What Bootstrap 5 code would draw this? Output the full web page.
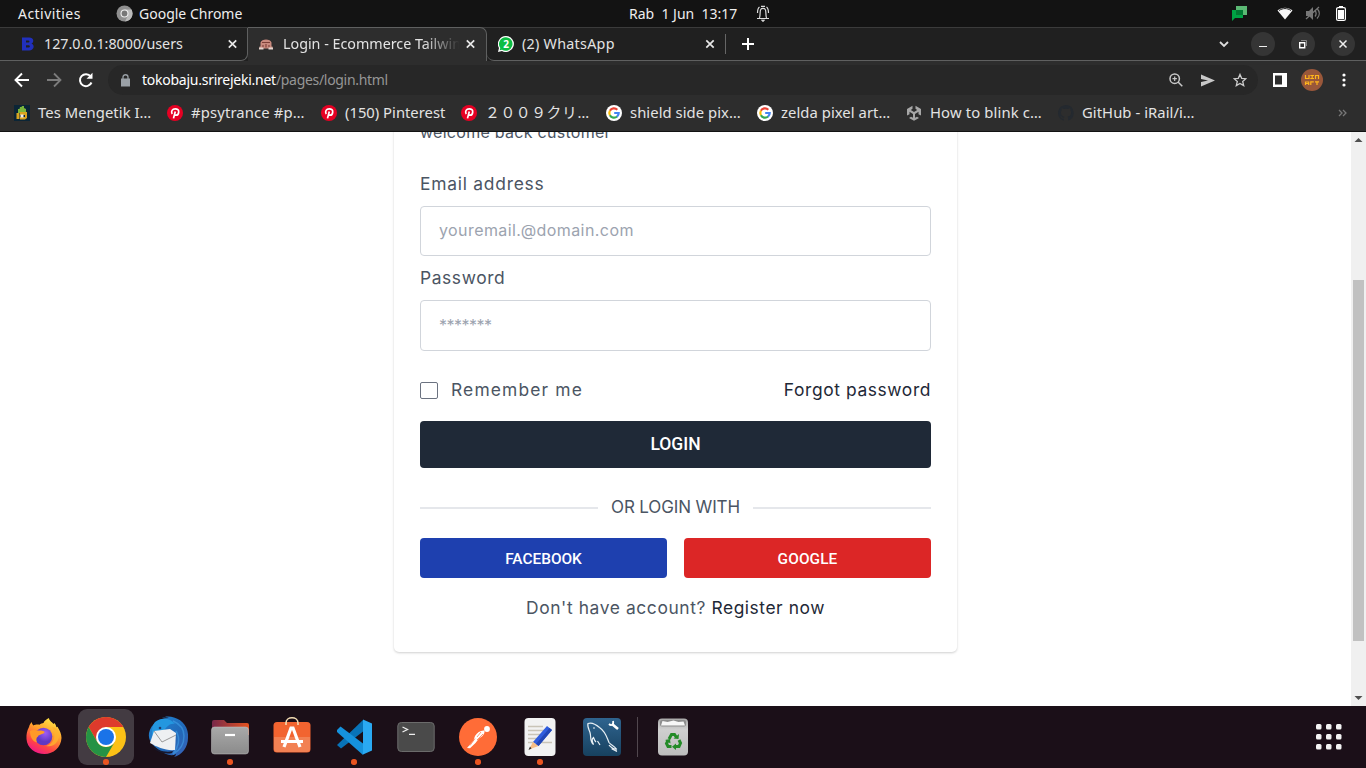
<!DOCTYPE html>
<html lang="id">
<head>
<meta charset="utf-8">
<meta name="viewport" content="width=device-width, initial-scale=1">
<title>Login - Ecommerce Tailwind</title>
<link rel="stylesheet" href="https://cdn.jsdelivr.net/npm/bootstrap@5.3.0/dist/css/bootstrap.min.css">
<style>
body{font-family:"Noto Sans","Noto Sans CJK JP",sans-serif;font-size:14px;line-height:20px;background:#fff}
svg{display:block;flex:none}
.desktop{width:1366px;height:768px}
.sysbar{height:27px;background:#131313;color:#eee;display:grid;grid-template-columns:18px 98px 510px 134px 1fr;line-height:27px}
.tabstrip{height:34px;background:#202020;border-top:1px solid #3b3b3b;color:#e3e3e3;font-size:14.3px}
.tab-side{border-bottom:1px solid #5f6060;height:33px}
.tab-one{width:248px;border-right:1px solid #5f6060;border-bottom-right-radius:7px;padding-left:20px;padding-right:9px}
.tab-live{width:239px;height:34px;margin-top:-1px;background:#2d2d2d;border-top:1px solid #5f6060;border-right:1px solid #5f6060;border-top-right-radius:7px;padding:0 10px 1px 11px}
.tab-rest{border-bottom-left-radius:7px;padding-left:11px}
.fadeout{width:176px;-webkit-mask-image:linear-gradient(90deg,#000 140px,transparent 177px);overflow:hidden}
.winbtn{width:24px;height:24px;border-radius:50%;background:#353535}
.toolbar{height:38px;background:#2d2d2d;padding-left:14px}
.omnibox{width:1150px;height:30px;border-radius:15px;background:#272727;padding:0 10px 0 13px;font-size:14px}
.host{letter-spacing:-.25px}
.path{letter-spacing:-.31px;color:#969696}
.bookmarks{height:33px;background:#2d2d2d;border-bottom:1px solid #121212;color:#e3e3e3;padding:0 0 5px 14px;font-size:14.8px;display:grid;grid-template-columns:153px 154px 140px 145px 151px 149px 152px 280px 20px}
.bookmarks>div{gap:8px;letter-spacing:.06px}
.bookmarks span{margin-top:-2px}
.bookmarks .wide{letter-spacing:.6px}
.viewport{height:574px}
.scrollrail{width:15px;background:#f0f0f0}
.thumb{width:11px;height:361px;background:#c1c1c1;margin-top:135px}
.page{color:#4b5563;font-family:Inter,sans-serif;font-size:17.4px;line-height:26px;letter-spacing:.6px}
.login-card{width:563px;height:540px;margin-top:-20px;padding:7px 26px 0;border-radius:5px;box-shadow:0 1px 3px rgba(0,0,0,.13),0 1px 2px rgba(0,0,0,.07)}
.welcome{font-size:16px;letter-spacing:.28px;margin-bottom:26px}
.email-label{letter-spacing:.76px}
.field{height:50px;border:1px solid #d1d5db;border-radius:4px;padding:0 18px 2px;margin-top:9px;margin-bottom:9px;font-size:16px;color:#4b5563;letter-spacing:.42px}
.field::placeholder{color:#9ca3af;opacity:1}
.field.pw{height:51px;margin-bottom:26px}
.field.pw::placeholder{letter-spacing:-.5px}
.box{width:18px;height:17px;border:1px solid #6b7280;border-radius:2px;margin-right:13px;margin-top:1px}
.remember{letter-spacing:1.15px}
.divider-text{font-size:17px;letter-spacing:-.13px}
.ink{color:#1f2937}
.btn-x{font-family:Roboto,sans-serif;font-weight:500;color:#fff;border-radius:4px;letter-spacing:0}
.btn-x:hover{color:#fff}
.btn-login{height:47px;font-size:17.5px;background:#1f2937;margin:18px 0 26px}
.btn-alt{height:40px;font-size:15.4px;line-height:42px}
.btn-fb{background:#1e40af}
.btn-gg{background:#dc2626;letter-spacing:.1px}
.rule{height:2px;background:#e5e7eb;margin-top:2px}
.dock{height:62px;background:#1b0f18;padding-left:16px}
.app{width:56px;height:56px;border-radius:9px;margin-right:6px}
.app.on{background:#433b42}
.app.run::after{content:"";position:absolute;left:25.3px;bottom:.3px;width:5.400px;height:5.400px;border-radius:50%;background:#e95420}
.t{white-space:nowrap}
</style>
</head>
<body>
<svg width="0" height="0" class="position-absolute"><defs>
<symbol id="pin" viewBox="0 0 16 16"><circle cx="8" cy="8" r="8" fill="#e60023"/><path d="M5.200 9C3.600 6.200 5.500 3.800 8.200 3.800c2.300 0 3.700 1.400 3.500 3.300-.2 2-1.400 3.200-2.800 3.100-.8-.1-1.300-.5-1.400-1M8.300 6.500 6.500 13.400" fill="none" stroke="#fff" stroke-width="1.700"/></symbol>
<symbol id="goog" viewBox="0 0 16 16"><circle cx="8" cy="8" r="8" fill="#fff"/><g fill="none" stroke-width="2.200"><path d="M11.300 4.700A4.700 4.700 0 0 0 3.900 5.800" stroke="#ea4335"/><path d="M3.900 5.700a4.700 4.700 0 0 0 0 4.600" stroke="#fbbc05"/><path d="M3.900 10.200a4.700 4.700 0 0 0 7.200 1.300" stroke="#34a853"/><path d="M8.200 8h4.500a4.700 4.700 0 0 1-1.700 3.600" stroke="#4285f4"/></g></symbol>
<symbol id="cross" viewBox="0 0 10 10"><path d="m1.300 1.300 7.400 7.400m0-7.400-7.400 7.400" stroke="#e8e8e8" stroke-width="1.700"/></symbol>
<linearGradient id="ffBody" x1=".8" y1="0" x2=".3" y2="1"><stop offset="0" stop-color="#fff04a"/><stop offset=".4" stop-color="#ffa02b"/><stop offset=".75" stop-color="#ff4545"/><stop offset="1" stop-color="#f0158a"/></linearGradient>
<radialGradient id="ffGlobe" cx=".6" cy=".3"><stop offset="0" stop-color="#a05cf5"/><stop offset="1" stop-color="#6038c4"/></radialGradient>
<linearGradient id="tb" x1="0" y1="0" x2="1" y2="1"><stop offset="0" stop-color="#1f8ad8"/><stop offset=".6" stop-color="#2268b8"/><stop offset="1" stop-color="#3b62b8"/></linearGradient>
<linearGradient id="grey" x2="0" y2="1"><stop offset="0" stop-color="#a9a9a9"/><stop offset="1" stop-color="#8b8b8b"/></linearGradient>
<linearGradient id="fold"><stop offset="0" stop-color="#78284a"/><stop offset="1" stop-color="#e5531f"/></linearGradient>
<linearGradient id="sql" x2="0" y2="1"><stop offset="0" stop-color="#2f648f"/><stop offset="1" stop-color="#17415f"/></linearGradient>
<linearGradient id="bin" x2="0" y2="1"><stop offset="0" stop-color="#a8a8a8"/><stop offset=".3" stop-color="#cfcfcf"/><stop offset="1" stop-color="#bdbdbd"/></linearGradient>
</defs></svg>
<div class="desktop d-flex flex-column overflow-hidden">
  <header class="sysbar">
    <span></span><span class="t" style="letter-spacing:.45px">Activities</span>
    <div class="d-flex align-items-center t"><svg width="17" height="17" viewBox="0 0 17 17" style="margin-right:6px"><circle cx="8.500" cy="8.500" r="8" fill="#8f8f8f"/><path d="M8.500 4.500h7A8 8 0 0 1 9 16.500l3-6z" fill="#bbb"/><circle cx="8.500" cy="8.500" r="4" fill="#eee"/><circle cx="8.500" cy="8.500" r="2.900" fill="#777"/></svg><span>Google Chrome</span></div>
    <div class="d-flex align-items-center t"><span style="margin-left:3px;white-space:pre">Rab  1 Jun  13:17</span></div>
    <div class="d-flex align-items-center">
      <svg style="margin-left:-4px" width="14" height="17" viewBox="0 0 14 17" fill="none" stroke="#ddd"><path d="M1 13.500h12M3.500 13c1-2 .2-7 1.200-8.500C5.500 3 8.500 3 9.300 4.500c1 1.500.2 6.500 1.200 8.500M1.500 8c0-3 .5-5 2-6M12.500 8c0-3-.5-5-2-6M5 1.300h4" stroke-width="1.200"/><path d="M5.500 15.200h3L7 16.500z" fill="#ddd"/></svg>
      <svg class="ms-auto" width="15" height="15" viewBox="0 0 15 15"><path d="M4 0h11v9H4z" fill="#5bb974"/><path d="M0 4h11v8H3l-3 3z" fill="#00a344"/><path d="M4 4h7v5H4z" fill="#007a33"/></svg>
      <svg style="margin-left:30px" width="16" height="13" viewBox="0 0 16 13"><path d="M.5 3.500C5-.2 11-.2 15.500 3.500L8 12.500z" fill="#f5f5f5"/><path d="M2 3.500c4-2.600 8-2.600 12 0" stroke="#222" fill="none"/></svg>
      <svg style="margin-left:12px" width="16" height="15" viewBox="0 0 16 15"><path d="M1 5h3l4-4v13l-4-4H1z" fill="#777"/><path d="M10 4.500c1.500 2 1.500 4 0 6M12 2.500c3 3 3 7 0 10M1 13 14 1" fill="none" stroke="#777" stroke-width="1.300"/></svg>
      <svg style="margin:0 20px 0 15px" width="10" height="15" viewBox="0 0 10 15"><path d="M3 0h4v2H3z" fill="#fff"/><rect x=".6" y="1.600" width="8.800" height="12.800" rx="1.500" fill="none" stroke="#fff" stroke-width="1.200"/><path d="M2 4h6v9H2z" fill="#fff"/></svg>
    </div>
  </header>
  <div class="tabstrip d-flex t">
    <div class="tab-side tab-one d-flex align-items-center">
      <svg width="16" height="16" viewBox="0 0 16 16"><path fill-rule="evenodd" d="M2 1.500h7.200c4.600 0 5.300 4.600 2.300 6.100 3.600 1.500 2.600 6.900-2.300 6.900H2zM6 4.500v2h2.300c1.600 0 1.600-2 0-2zM6 9.200v2.300h2.600c1.700 0 1.700-2.300 0-2.300z" fill="#2130bd"/></svg>
      <span style="margin-left:8px">127.0.0.1:8000/users</span><svg class="ms-auto" width="11" height="10"><use href="#cross"/></svg>
    </div>
    <div class="tab-live d-flex align-items-center">
      <svg width="14" height="12" viewBox="0 0 14 12"><path d="M1.500 4.500C2.500.5 11.500.5 12.500 4.500v4h1v2H.5v-2h1z" fill="#c98a7e"/><path d="M3 4.500h8M4 7v2.500M7 6v3.500M10 7v2.500" stroke="#7d4038" stroke-width="1.100"/><path d="M0 9.500h4.500v2H0zM9.500 9.500H14v2H9.500z" fill="#e5d5cf"/></svg>
      <div class="fadeout" style="margin-left:10px">Login - Ecommerce Tailwin</div><svg class="ms-auto" width="11" height="10"><use href="#cross"/></svg>
    </div>
    <div class="tab-side tab-rest flex-grow-1 d-flex align-items-center">
      <svg width="16" height="16" viewBox="0 0 16 16"><path d="M8 0a8 8 0 1 1-4 15L0 16l1-4A8 8 0 0 1 8 0z" fill="#fff"/><path d="M8 1.200A6.800 6.800 0 1 1 4 13.700l-2.300.600.600-2.300A6.800 6.800 0 0 1 8 1.200z" fill="#0cbd43"/><text x="8" y="11.500" font-size="10" font-weight="700" text-anchor="middle" fill="#fff">2</text></svg>
      <span style="margin-left:8px;letter-spacing:.28px">(2) WhatsApp</span>
      <svg width="10" height="10" style="margin-left:auto"><use href="#cross"/></svg>
      <svg width="1" height="20" style="margin-left:10px"><path d="M0 0h1v20H0z" fill="#666"/></svg>
      <svg width="12" height="12" style="margin:0 465px 0 16px"><path d="M6 0v12M0 6h12" stroke="#fff" stroke-width="2"/></svg>
      <svg width="10" height="7"><path d="m1 1 4 4 4-4" fill="none" stroke="#ddd" stroke-width="1.800"/></svg>
      <div class="winbtn" style="margin-left:22px"><svg width="24" height="24"><path d="M8 14.500h8" stroke="#eee"/></svg></div>
      <div class="winbtn" style="margin-left:16px"><svg width="24" height="24" fill="none"><path d="M8.700 10.700h5v5h-5z" stroke="#fff" stroke-width="1.400"/><path d="M10 8.500h5.500V14" stroke="#888"/></svg></div>
      <div class="winbtn" style="margin:0 11px 0 16px"><svg width="24" height="24"><path d="m8.500 8.500 7 7m0-7-7 7" stroke="#eee" stroke-width="1.500"/></svg></div>
    </div>
  </div>
  <div class="toolbar d-flex align-items-center t">
    <svg width="16" height="16" viewBox="0 0 16 16"><path d="M15 8H2m6-6.500L1.500 8 8 14.500" fill="none" stroke="#fff" stroke-width="1.900"/></svg>
    <svg width="16" height="16" viewBox="0 0 16 16" style="margin-left:16px"><path d="M1 8h13M8 1.500 14.500 8 8 14.500" fill="none" stroke="#7c7c7c" stroke-width="1.800"/></svg>
    <svg width="16" height="16" viewBox="0 0 16 16" style="margin:0 14px 0 16px"><path d="M13.500 10.500a6 6 0 1 1-.8-6" fill="none" stroke="#fff" stroke-width="2"/><path d="M14.500.8v6h-6z" fill="#fff"/></svg>
    <div class="omnibox d-flex align-items-center">
      <svg width="9" height="13" viewBox="0 0 9 13"><path d="M0 4.500h9v8H0z" fill="#9aa0a6"/><path d="M2 5V3c0-3 5-3 5 0v2" fill="none" stroke="#9aa0a6" stroke-width="1.300"/></svg>
      <span style="margin-left:12px" class="text-white host">tokobaju.srirejeki.net</span><span class="path">/pages/login.html</span>
      <svg class="ms-auto" width="14" height="14" viewBox="0 0 14 14" fill="none" stroke="#c8c8c8" stroke-width="1.500"><circle cx="5.700" cy="5.700" r="4.700"/><path d="m9 9 4.300 4.300"/><path d="M3.500 5.700h4.400M5.700 3.500v4.400" stroke-width="1.200"/></svg>
      <svg width="14" height="13" viewBox="0 0 14 13" style="margin-left:18px"><path d="M0 .5 14 6.500 0 12.500V8l7-1.500L0 5z" fill="#c8c8c8"/></svg>
      <svg width="14" height="14" viewBox="0 0 14 14" style="margin:0 1px 0 18px"><path d="m7 1.400 1.700 3.900 4.200.4-3.200 2.700 1 4.200L7 10.400l-3.700 2.200 1-4.200L1.100 5.700l4.200-.4z" fill="none" stroke="#ccc" stroke-width="1.300"/></svg>
    </div>
    <svg width="14" height="14" style="margin-left:15px"><path d="M0 0h14v14H0z" fill="#fff"/><path d="M2 2.500h7v9H2z" fill="#2d2d2d"/></svg>
    <svg width="22" height="22" viewBox="0 0 22 22" style="margin-left:14px"><circle cx="11" cy="11" r="11" fill="#99573a"/><path d="M4.500 6v3.500h3.500V6M9.300 6.500h3.700M9.300 9.500h3.700M11.200 6.500v3M14.500 10V6.500h3V10M4.500 16v-3h3.200V16M4.500 14.500h3M9.800 16v-3.200h3M14 12.800h4M16 12.500V16" fill="none" stroke="#ffb51c" stroke-width="1.200"/></svg>
    <svg width="4" height="14" style="margin-left:19px" fill="#fff"><circle cx="2" cy="2" r="1.600"/><circle cx="2" cy="7" r="1.600"/><circle cx="2" cy="12" r="1.600"/></svg>
  </div>
  <nav class="bookmarks align-items-center t">
    <div class="d-flex align-items-center"><svg width="16" height="16" viewBox="0 0 16 16"><path d="M0 0h16v16H0z" fill="#0b2536"/><path d="M4 8V4h1.500L6 2h1.500L8 1h2v2l2 1v4z" fill="#7bb63c"/><path d="M2.500 8h3v6h-3zM6 7h7v3H6zM11 10h2v3l-2 1.500H6V12h5z" fill="#d9a521"/><path d="M6.500 9.500h3v3h-3z" fill="#eee"/></svg><span>Tes Mengetik I…</span></div>
    <div class="d-flex align-items-center"><svg width="16" height="16"><use href="#pin"/></svg><span style="letter-spacing:.15px">#psytrance #p…</span></div>
    <div class="d-flex align-items-center"><svg width="16" height="16"><use href="#pin"/></svg><span style="letter-spacing:0">(150) Pinterest</span></div>
    <div class="d-flex align-items-center"><svg width="16" height="16"><use href="#pin"/></svg><span class="wide">２００９クリ…</span></div>
    <div class="d-flex align-items-center"><svg width="16" height="16"><use href="#goog"/></svg><span>shield side pix…</span></div>
    <div class="d-flex align-items-center"><svg width="16" height="16"><use href="#goog"/></svg><span>zelda pixel art…</span></div>
    <div class="d-flex align-items-center"><svg width="16" height="16" viewBox="0 0 16 16"><path d="M6.500.8v3L4.800 5 8 7l3.200-2-1.700-1.200v-3L15 4v6.500l-2.500-1.300V6.800L9 9v3.800l2-1 2 1.200-5 2.700L3 13l2-1.200 2 1V9L3.500 6.800v2.400L1 10.500V4z" fill="#a7a7a7"/></svg><span style="letter-spacing:.15px">How to blink c…</span></div>
    <div class="d-flex align-items-center"><svg width="16" height="16" viewBox="0 0 16 16"><path d="M8 0C3.600 0 0 3.600 0 8c0 3.500 2.300 6.500 5.500 7.600.4.100.5-.2.500-.4v-1.500c-2.200.5-2.700-1-2.700-1-.4-.9-.9-1.200-.9-1.200-.7-.5.100-.5.100-.5.800.1 1.200.8 1.200.8.700 1.200 1.900.9 2.300.7.100-.5.300-.9.500-1.100-1.800-.2-3.600-.9-3.600-4 0-.9.300-1.600.8-2.100-.1-.2-.4-1 .1-2.100 0 0 .7-.2 2.200.8a7.500 7.500 0 0 1 4 0c1.500-1 2.200-.8 2.200-.8.4 1.100.2 1.900.1 2.100.5.600.8 1.300.8 2.100 0 3.100-1.900 3.700-3.700 3.900.3.300.6.800.6 1.500v2.200c0 .2.100.5.600.4A8 8 0 0 0 8 0z" fill="#24292f"/></svg><span>GitHub - iRail/i…</span></div>
    <svg width="9" height="8"><path d="m1 1 3 3-3 3m4-6 3 3-3 3" fill="none" stroke="#777" stroke-width="1.300"/></svg>
  </nav>
  <div class="viewport d-flex overflow-hidden flex-shrink-0">
    <main class="page flex-grow-1 d-flex justify-content-center align-items-start">
      <form class="login-card">
        <div class="welcome">welcome back customer</div>
        <label class="d-block email-label" for="email">Email address</label>
        <input id="email" class="field w-100 d-block" placeholder="youremail.@domain.com">
        <label class="d-block" for="password">Password</label>
        <input id="password" class="field pw w-100 d-block" type="password" placeholder="*******">
        <div class="d-flex align-items-center"><span class="box"></span><span class="remember">Remember me</span><a class="ms-auto ink text-decoration-none">Forgot password</a></div>
        <button type="button" class="btn btn-x btn-login w-100 p-0 border-0 d-block">LOGIN</button>
        <div class="d-flex align-items-center" style="gap:13px;margin-bottom:18px"><div class="rule flex-grow-1"></div><span class="divider-text">OR LOGIN WITH</span><div class="rule flex-grow-1"></div></div>
        <div class="d-flex" style="gap:17px"><button type="button" class="btn btn-x btn-alt btn-fb w-50 p-0 border-0">FACEBOOK</button><button type="button" class="btn btn-x btn-alt btn-gg w-50 p-0 border-0">GOOGLE</button></div>
        <div class="text-center t" style="margin-top:17px">Don't have account? <a class="ink text-decoration-none" style="letter-spacing:.55px">Register now</a></div>
      </form>
    </main>
    <div class="scrollrail d-flex flex-column align-items-center"><svg width="15" height="13"><path d="M3.500 10h8l-4-4z" fill="#505050"/></svg><div class="thumb"></div><svg class="mt-auto" width="15" height="14"><path d="M3.500 4h8l-4 4z" fill="#505050"/></svg></div>
  </div>
  <footer class="dock d-flex align-items-center flex-shrink-0">
    <!-- Firefox -->
    <div class="app"><svg width="56" height="56" viewBox="0 0 56 56"><path d="M13 18c.5-2 1.500-3.500 2.500-5 .5 1.500 1 2.500 2 3.500 1.500-1 4-1.200 6-.8 1-1 3-1.500 4-1.600.5-2 3-4 5.500-5.100 0 2.500 3 4 4.500 6l1-1c1 1.200 1.700 2.700 2 4.200l1-.5c2.500 4 4 7.600 4 11.300-.5 9.500-8 16-17 16S11 39 10.500 30c-.3-5 .5-8 2.500-12z" fill="url(#ffBody)"/><circle cx="27.500" cy="27.500" r="8.800" fill="url(#ffGlobe)"/><path d="M14 22c3-2 6-.5 9-.5s6 .5 5.500 2c-1.500 2-6 2-6.500 4-2 1-2 3.500-1 6-4-1-7-5-7-11.500z" fill="#ff9a28"/><path d="M36 18c5 8 2 17-6 19 8 2 14-5 13-13-.5-3-3-6-7-6z" fill="#ffb12e" opacity=".8"/></svg></div>
    <!-- Chrome -->
    <div class="app on run position-relative"><svg width="56" height="56" viewBox="0 0 56 56"><circle cx="28" cy="28" r="20" fill="#fbc116"/><path d="M10.700 18A20 20 0 0 1 45.300 18H28L19.300 33z" fill="#de3a2c"/><path d="M10.700 18 19.300 33a10 10 0 0 0 17.400 0L28 48A20 20 0 0 1 10.700 18z" fill="#259245"/><circle cx="28" cy="28" r="10" fill="#fff"/><circle cx="28" cy="28" r="8" fill="#1a73e8"/></svg></div>
    <!-- Thunderbird -->
    <div class="app"><svg width="56" height="56" viewBox="0 0 56 56"><path d="M9 24c2-9 10-15 20-15-2-1-5-1-7 0 3-2 8-2 12-.500C43 11 49 19 48 29c0 9-6 17-14 19 1-1 2-2 2-3-5 3-11 0-17-4-7-5-11-10-10-17z" fill="url(#tb)"/><path d="M15 13c7-5 15-4 20 2-5-1-8 2-12 8l-11 3c0-5 0-9 3-13z" fill="#2497df"/><path d="m14 22 16-2 6 4-1 17c-9 1-18-3-25-7z" fill="#eef0f2"/><path d="m14 22 8 11 14-7" fill="none" stroke="#999"/><path d="M12 37c5 4 13 7 21 5l-1 2c-8 2-17-2-20-7z" fill="#17182e"/><path d="M36 22c5 8 2 17-3 23 6-3 11-9 11-18M33 12c7 3 11 8 11 15" stroke="#45aaf0" stroke-width="1.500" fill="none" opacity=".5"/><circle cx="20" cy="19" r="1.300" fill="#213c6e"/></svg></div>
    <!-- Files -->
    <div class="app run position-relative"><svg width="56" height="56" viewBox="0 0 56 56"><path d="M10 13q0-2 2-2h10l3 3h20q2 0 2 2v10H10z" fill="url(#fold)"/><rect x="9.500" y="18" width="37" height="27" rx="3" fill="url(#grey)" stroke="#c5c5c5" stroke-width=".5"/><path d="M23 26h10" stroke="#fff" stroke-width="2.200"/></svg></div>
    <!-- Software -->
    <div class="app"><svg width="56" height="56" viewBox="0 0 56 56"><rect x="9.500" y="13" width="37" height="30.500" rx="3.500" fill="#f26430"/><path d="M10 28h36v12q0 3-3 3H13q-3 0-3-3z" fill="#f28153"/><path d="M22 16v-2c0-7 12-7 12 0v2" fill="none" stroke="#f4ddb4" stroke-width="1.600"/><path d="m20 38 7-19h2l7 19M17 32.500h22" fill="none" stroke="#fff" stroke-width="3.200"/></svg></div>
    <!-- VS Code -->
    <div class="app run position-relative"><svg width="56" height="56" viewBox="0 0 56 56"><path d="M11 36 37 11l2 10L15 39.500z" fill="#0873b8"/><path d="m11 21 3.500-3.500L39 36l-2 10L11 23z" fill="#1592dd"/><path d="m37 10.500 9 4v27l-9 4z" fill="#2aa9f2"/></svg></div>
    <!-- Terminal -->
    <div class="app"><svg width="56" height="56" viewBox="0 0 56 56"><rect x="9.800" y="13.500" width="36.400" height="29" rx="3.500" fill="#4a4a4a" stroke="#6b6b6b"/><path d="m14.500 18 5 2.500-5 2.500M21 25.300h6" fill="none" stroke="#eee" stroke-width="1.300"/></svg></div>
    <!-- Postman -->
    <div class="app run position-relative"><svg width="56" height="56" viewBox="0 0 56 56"><circle cx="28" cy="28" r="19" fill="#ff6c37"/><circle cx="37" cy="20" r="2.900" fill="#fff"/><path d="M34.500 21.500c-4-.5-7 2-9.500 5.500l-1.500 4.500c-2 2.500-4.500 5-6.500 7.500l3 .2 5.500-5.200 3.500-4.500c3-2 6-4 5.500-8z" fill="#fff"/><path d="m25 29.500-5 7m13-11.500-6 6m4-8-4 5" stroke="#ff6c37" stroke-width=".7"/></svg></div>
    <!-- Text editor -->
    <div class="app run position-relative"><svg width="56" height="56" viewBox="0 0 56 56"><rect x="12.500" y="9" width="31" height="38" rx="4" fill="#f2f2f2"/><path d="M16 17.500h15M16 21.500h17M16 25.500h15M16 29.500h12M16 33.500h24" stroke="#c9c4b7" stroke-width="1.300"/><path d="m21 33 14-16 5 4-13.500 16z" fill="#2f5dde"/><path d="m21 33 5.500 4L17 40.500z" fill="#f5bd86"/><path d="m18 37.500 1.500 2-3 1.500z" fill="#333"/><path d="m37.500 19 2.500 2-13.500 16-2.500-2z" fill="#2146b5"/></svg></div>
    <!-- MySQL Workbench -->
    <div class="app"><svg width="56" height="56" viewBox="0 0 56 56"><rect x="9" y="9" width="38" height="38" rx="4" fill="url(#sql)"/><path d="M22 33c-1-1-2-3-2.500-4.500-1.500 1-1.500 4 0 7-4-3-2-7-3.500-12-1-3-3-6-2-9 4-1.500 8 1 11.500 4 6 4 7 9 9.500 15 2 2.500 5 3.500 7 6-2 0-4 0-4 .5l5 2.500M26 36l-2.500-4M43 41c-3-1-6-2-8-5" fill="none" stroke="#e8f0f5" stroke-width="1.200"/><circle cx="20" cy="19" r=".8" fill="#fff"/><path d="m38 15 6 5" stroke="#fff" stroke-width="2.600"/><path d="M35 15c2 2 5 1 4-3" stroke="#fff" stroke-width="1.800" fill="none"/></svg></div>
    <svg width="1" height="40" style="margin-left:1px;margin-right:7px"><path d="M0 0h1v40H0z" fill="#51474e"/></svg>
    <!-- Trash -->
    <div class="app"><svg width="56" height="56" viewBox="0 0 56 56"><rect x="13" y="9.500" width="30" height="37" rx="4" fill="url(#bin)"/><rect x="15" y="11" width="26" height="6.500" rx="2" fill="#8d8d8d"/><path d="m16 16.500 1.500-4.500 5 1 6-1.500 5 1.500 5-.5 1.500 4z" fill="#f7f7f7"/><g fill="none" stroke="#238b27" stroke-width="3"><path d="m24 30 2.500-4.500h3l2 3M34 31l1.500 3-1.500 3.500h-3.500M26.500 37.500H23l-1.500-3 1.500-3"/></g><g fill="#238b27"><path d="m28.500 29.500 5 .5.500-5zM31 34.500v6.500l-4-3.300zM20 31l5-1 .5 4.500z"/></g></svg></div>
    <svg class="ms-auto" width="26" height="26" viewBox="0 0 26 26" style="margin-right:24px" fill="#f4f4f4"><rect x="0" y="0" width="5.500" height="5.500" rx="1.500"/><rect x="10" y="0" width="5.500" height="5.500" rx="1.500"/><rect x="20" y="0" width="5.500" height="5.500" rx="1.500"/><rect x="0" y="10" width="5.500" height="5.500" rx="1.500"/><rect x="10" y="10" width="5.500" height="5.500" rx="1.500"/><rect x="20" y="10" width="5.500" height="5.500" rx="1.500"/><rect x="0" y="20" width="5.500" height="5.500" rx="1.500"/><rect x="10" y="20" width="5.500" height="5.500" rx="1.500"/><rect x="20" y="20" width="5.500" height="5.500" rx="1.500"/></svg>
  </footer>
</div>
<script src="https://cdn.jsdelivr.net/npm/bootstrap@5.3.0/dist/js/bootstrap.bundle.min.js"></script>
</body>
</html>
